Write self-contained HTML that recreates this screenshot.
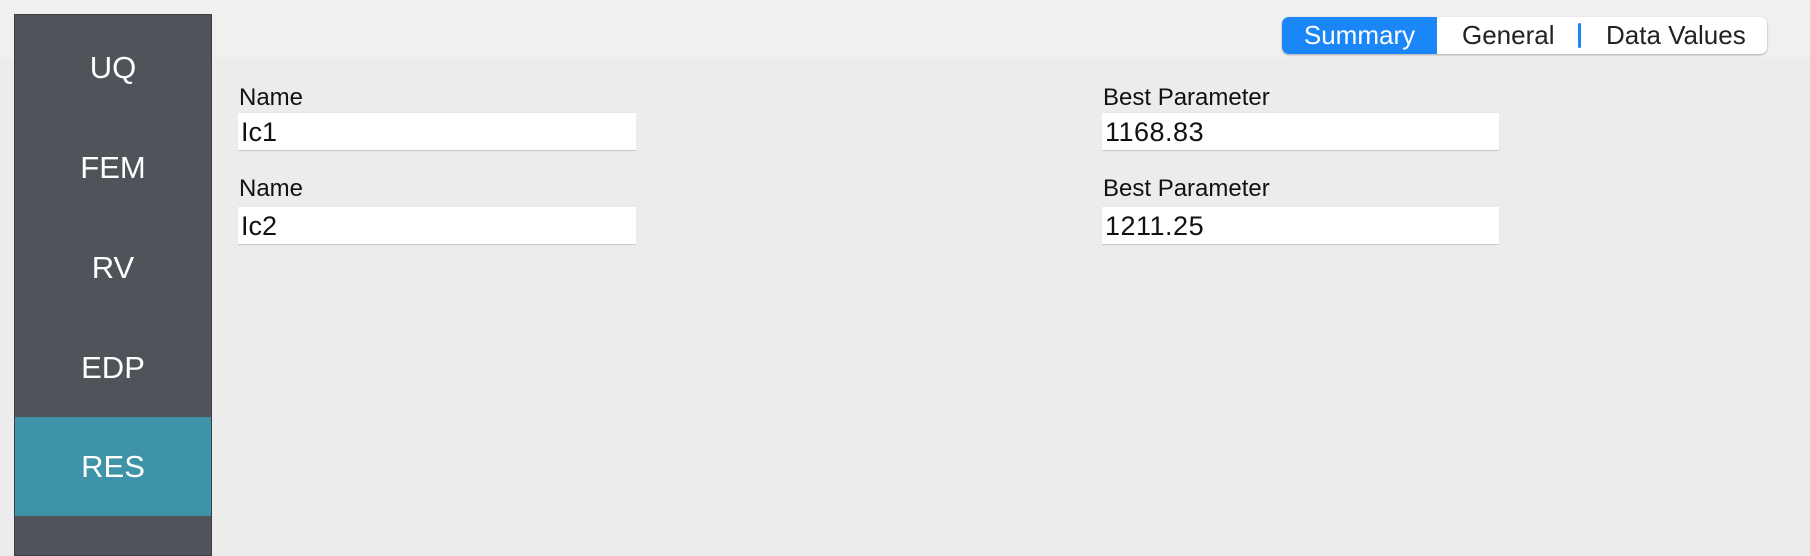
<!DOCTYPE html>
<html><head><style>
body{margin:0;width:1810px;height:550px;background:#ececec;font-family:"Liberation Sans",sans-serif;position:relative;overflow:hidden}
.top{position:absolute;left:0;top:0;width:1810px;height:58px;background:#f0f0f0}
.side{position:absolute;left:14px;top:14px;width:196px;height:540px;background:#4f535a;border:1px solid #3a3d42}
.it{position:absolute;left:0;width:196px;text-align:center;color:#fff;font-size:31px;line-height:40px}
.res{position:absolute;left:0;top:402px;width:196px;height:99px;background:#3e93a8}
.tabs{position:absolute;left:1282px;top:17px;width:485px;height:37px;background:#fff;border-radius:7px;box-shadow:0 1px 2px rgba(0,0,0,.3);font-size:26px;color:#222}
.sum{position:absolute;left:0;top:0;width:155px;height:37px;background:#1a86f7;border-radius:7px 0 0 7px;color:#fff;text-align:center;line-height:37px}
.t{position:absolute;top:0;line-height:37px}
.lbl{position:absolute;font-size:24px;color:#111}
.in{position:absolute;height:38px;background:#fff;border-bottom:1px solid #ccc;box-shadow:0 0 1px #ddd;font-size:27px;line-height:38px;padding-left:3px;box-sizing:border-box;color:#111}
</style></head><body>
<div class="top"></div>
<div class="side">
<div class="res"></div>
<div class="it" style="top:33px">UQ</div>
<div class="it" style="top:133px">FEM</div>
<div class="it" style="top:233px">RV</div>
<div class="it" style="top:333px">EDP</div>
<div class="it" style="top:432px">RES</div>
</div>
<div class="tabs">
<div class="sum">Summary</div>
<div class="t" style="left:180px">General</div>
<div style="position:absolute;left:296px;top:6px;width:3px;height:25px;background:#1a86f7;border-radius:2px"></div>
<div class="t" style="left:324px">Data Values</div>
</div>
<div class="lbl" style="left:239px;top:84px">Name</div>
<div class="in" style="left:238px;top:113px;width:398px">Ic1</div>
<div class="lbl" style="left:239px;top:175px">Name</div>
<div class="in" style="left:238px;top:207px;width:398px">Ic2</div>
<div class="lbl" style="left:1103px;top:84px">Best Parameter</div>
<div class="in" style="left:1102px;top:113px;width:397px;letter-spacing:0.5px">1168.83</div>
<div class="lbl" style="left:1103px;top:175px">Best Parameter</div>
<div class="in" style="left:1102px;top:207px;width:397px;letter-spacing:0.5px">1211.25</div>
</body></html>
